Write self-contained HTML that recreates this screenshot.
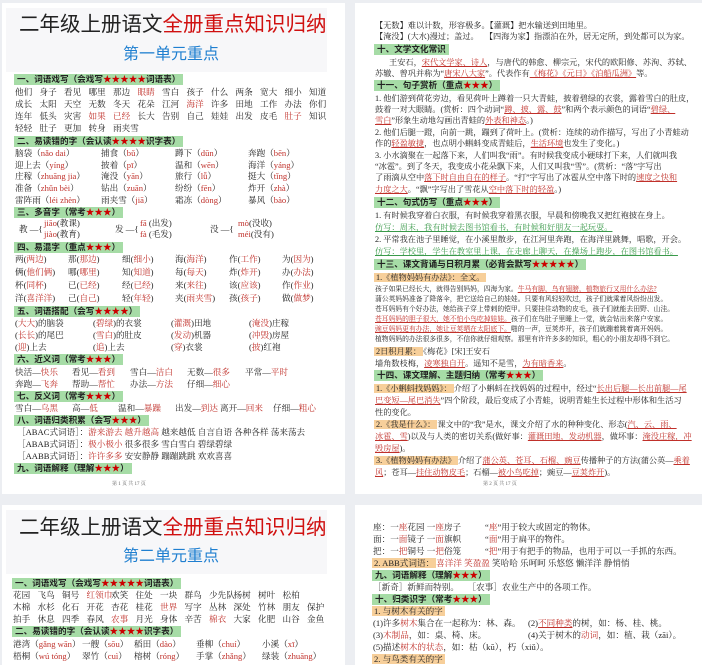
<!DOCTYPE html><html><head><meta charset="utf-8"><style>
*{margin:0;padding:0;box-sizing:border-box}
body{width:702px;height:662px;background:#eceef2;position:relative;overflow:hidden;font-family:"Liberation Serif","Noto Serif CJK SC",serif;font-size:8.6px;color:#222}
.p{position:absolute;background:#fff}
.l{position:absolute;white-space:nowrap;line-height:11px}
.h{position:absolute;background:#a6dca6;font-weight:bold;padding:0 3px;line-height:11px;white-space:nowrap;font-family:"Liberation Sans","Noto Sans CJK SC",sans-serif}
.o{background:#f7cf9a;padding:0 2px}
.r{color:#c0302a}
.u{color:#c0302a;text-decoration:underline}
.g{color:#3a9a4a;text-decoration:underline}
.s{color:#c00}
.t{position:absolute;font-family:"Liberation Sans","Noto Sans CJK SC",sans-serif;font-size:20.5px;white-space:nowrap;line-height:24px}
.st{position:absolute;font-family:"Liberation Sans","Noto Sans CJK SC",sans-serif;font-size:16px;color:#1f7fd0;white-space:nowrap;line-height:18px}
.f{position:absolute;font-size:5px;color:#666}
.w span{display:inline-block;width:24.5px}
.R .l{font-size:8.2px}
</style></head><body>
<div class="p" style="left:2px;top:3px;width:343px;height:491px"></div>
<div class="p" style="left:355px;top:3px;width:347px;height:491px"></div>
<div class="p" style="left:2px;top:505px;width:343px;height:160px"></div>
<div class="p" style="left:355px;top:505px;width:347px;height:160px"></div>
<div style="position:absolute;left:6px;top:8px;width:321px;height:64px;background:#f7f7f9"></div>
<div class="t" style="left:19px;top:13px">二年级上册语文<span style="color:#d01010">全册重点知识归纳</span></div>
<div class="st" style="left:123px;top:46px">第一单元重点</div>
<div class="h" style="left:14px;top:74px">一、词语戏写（会戏写<span class="s">★★★★★</span>词语表）</div>
<div class="l w" style="left:15px;top:87px"><span>他们</span><span>身子</span><span>看见</span><span>哪里</span><span>那边</span><span class="r">眼睛</span><span>雪白</span><span>孩子</span><span>什么</span><span>两条</span><span>宽大</span><span>细小</span><span>知道</span></div>
<div class="l w" style="left:15px;top:99px"><span>成长</span><span>太阳</span><span>天空</span><span>无数</span><span>冬天</span><span>花朵</span><span>江河</span><span class="r">海洋</span><span>许多</span><span>田地</span><span>工作</span><span>办法</span><span>你们</span></div>
<div class="l w" style="left:15px;top:111px"><span>连年</span><span>低头</span><span>灾害</span><span class="r">如果</span><span class="r">已经</span><span>长大</span><span>告别</span><span>自己</span><span>娃娃</span><span>出发</span><span>皮毛</span><span class="r">肚子</span><span>知识</span></div>
<div class="l w" style="left:15px;top:123px"><span>轻轻</span><span>肚子</span><span>更加</span><span>转身</span><span>雨夹雪</span></div>
<div class="h" style="left:14px;top:136px">二、易读错的字（会认读<span class="s">★★★★</span>识字表）</div>
<div class="l" style="left:15px;top:148px">脑袋（<span class="r">nǎo dai</span>）</div><div class="l" style="left:101px;top:148px">捕食（<span class="r">bǔ</span>）</div><div class="l" style="left:175px;top:148px">蹲下（<span class="r">dūn</span>）</div><div class="l" style="left:248px;top:148px">奔跑（<span class="r">bēn</span>）</div>
<div class="l" style="left:15px;top:160px">迎上去（<span class="r">yíng</span>）</div><div class="l" style="left:101px;top:160px">披着（<span class="r">pī</span>）</div><div class="l" style="left:175px;top:160px">温和（<span class="r">wēn</span>）</div><div class="l" style="left:248px;top:160px">海洋（<span class="r">yáng</span>）</div>
<div class="l" style="left:15px;top:171px">庄稼（<span class="r">zhuāng jia</span>）</div><div class="l" style="left:101px;top:171px">淹没（<span class="r">yān</span>）</div><div class="l" style="left:175px;top:171px">旅行（<span class="r">lǚ</span>）</div><div class="l" style="left:248px;top:171px">挺大（<span class="r">tǐng</span>）</div>
<div class="l" style="left:15px;top:183px">准备（<span class="r">zhǔn bèi</span>）</div><div class="l" style="left:101px;top:183px">钻出（<span class="r">zuān</span>）</div><div class="l" style="left:175px;top:183px">纷纷（<span class="r">fēn</span>）</div><div class="l" style="left:248px;top:183px">炸开（<span class="r">zhà</span>）</div>
<div class="l" style="left:15px;top:195px">雷阵雨（<span class="r">léi zhèn</span>）</div><div class="l" style="left:101px;top:195px">雨夹雪（<span class="r">jiā</span>）</div><div class="l" style="left:175px;top:195px">霜冻（<span class="r">dòng</span>）</div><div class="l" style="left:248px;top:195px">暴风（<span class="r">bào</span>）</div>
<div class="h" style="left:14px;top:207px">三、多音字（常考<span class="s">★★★</span>）</div>
<div class="l" style="left:19px;top:224px">教 —{</div><div class="l" style="left:44px;top:218px"><span class="r">jiāo</span>(教课)<br><span class="r">jiào</span>(教育)</div>
<div class="l" style="left:115px;top:224px">发 —{</div><div class="l" style="left:140px;top:218px"><span class="r">fā</span> (出发)<br><span class="r">fà</span> (毛发)</div>
<div class="l" style="left:210px;top:224px">没 —{</div><div class="l" style="left:238px;top:218px"><span class="r">mò</span>(没收)<br><span class="r">méi</span>(没有)</div>
<div class="h" style="left:14px;top:242px">四、易混字（重点<span class="s">★★★</span>）</div>
<div class="l" style="left:15px;top:254px">两(<span class="r">两边</span>)</div><div class="l" style="left:68px;top:254px">那(<span class="r">那边</span>)</div><div class="l" style="left:122px;top:254px">细(<span class="r">细小</span>)</div><div class="l" style="left:175px;top:254px">海(<span class="r">海洋</span>)</div><div class="l" style="left:229px;top:254px">作(<span class="r">工作</span>)</div><div class="l" style="left:282px;top:254px">为(<span class="r">因为</span>)</div>
<div class="l" style="left:15px;top:267px">俩(<span class="r">他们俩</span>)</div><div class="l" style="left:68px;top:267px">哪(<span class="r">哪里</span>)</div><div class="l" style="left:122px;top:267px">知(<span class="r">知道</span>)</div><div class="l" style="left:175px;top:267px">每(<span class="r">每天</span>)</div><div class="l" style="left:229px;top:267px">炸(<span class="r">炸开</span>)</div><div class="l" style="left:282px;top:267px">办(<span class="r">办法</span>)</div>
<div class="l" style="left:15px;top:280px">杯(<span class="r">同杯</span>)</div><div class="l" style="left:68px;top:280px">已(<span class="r">已经</span>)</div><div class="l" style="left:122px;top:280px">经(<span class="r">已经</span>)</div><div class="l" style="left:175px;top:280px">来(<span class="r">来往</span>)</div><div class="l" style="left:229px;top:280px">该(<span class="r">应该</span>)</div><div class="l" style="left:282px;top:280px">作(<span class="r">作业</span>)</div>
<div class="l" style="left:15px;top:293px">洋(<span class="r">喜洋洋</span>)</div><div class="l" style="left:68px;top:293px">己(<span class="r">自己</span>)</div><div class="l" style="left:122px;top:293px">轻(<span class="r">年轻</span>)</div><div class="l" style="left:175px;top:293px">夹(<span class="r">雨夹雪</span>)</div><div class="l" style="left:229px;top:293px">孩(<span class="r">孩子</span>)</div><div class="l" style="left:282px;top:293px">做(<span class="r">做梦</span>)</div>
<div class="h" style="left:14px;top:306px">五、词语搭配（会写<span class="s">★★★★</span>）</div>
<div class="l" style="left:15px;top:318px">(<span class="r">大大</span>)的脑袋</div><div class="l" style="left:93px;top:318px">(<span class="r">碧绿</span>)的衣裳</div><div class="l" style="left:171px;top:318px">(<span class="r">灌溉</span>)田地</div><div class="l" style="left:249px;top:318px">(<span class="r">淹没</span>)庄稼</div>
<div class="l" style="left:15px;top:330px">(<span class="r">长长</span>)的尾巴</div><div class="l" style="left:93px;top:330px">(<span class="r">雪白</span>)的肚皮</div><div class="l" style="left:171px;top:330px">(<span class="r">发动</span>)机器</div><div class="l" style="left:249px;top:330px">(<span class="r">冲毁</span>)房屋</div>
<div class="l" style="left:15px;top:342px">(<span class="r">迎</span>)上去</div><div class="l" style="left:93px;top:342px">(<span class="r">追</span>)上去</div><div class="l" style="left:171px;top:342px">(<span class="r">穿</span>)衣裳</div><div class="l" style="left:249px;top:342px">(<span class="r">披</span>)红袍</div>
<div class="h" style="left:14px;top:354px">六、近义词（常考<span class="s">★★★</span>）</div>
<div class="l" style="left:15px;top:367px">快活—<span class="r">快乐</span></div><div class="l" style="left:72px;top:367px">看见—<span class="r">看到</span></div><div class="l" style="left:130px;top:367px">雪白—<span class="r">洁白</span></div><div class="l" style="left:187px;top:367px">无数—<span class="r">很多</span></div><div class="l" style="left:245px;top:367px">平常—<span class="r">平时</span></div>
<div class="l" style="left:15px;top:379px">奔跑—<span class="r">飞奔</span></div><div class="l" style="left:72px;top:379px">帮助—<span class="r">帮忙</span></div><div class="l" style="left:130px;top:379px">办法—<span class="r">方法</span></div><div class="l" style="left:187px;top:379px">仔细—<span class="r">细心</span></div>
<div class="h" style="left:14px;top:391px">七、反义词（常考<span class="s">★★★</span>）</div>
<div class="l" style="left:15px;top:403px">雪白—<span class="r">乌黑</span></div><div class="l" style="left:72px;top:403px">高—<span class="r">低</span></div><div class="l" style="left:118px;top:403px">温和—<span class="r">暴躁</span></div><div class="l" style="left:175px;top:403px">出发—<span class="r">到达</span></div><div class="l" style="left:220px;top:403px">离开—<span class="r">回来</span></div><div class="l" style="left:273px;top:403px">仔细—<span class="r">粗心</span></div>
<div class="h" style="left:14px;top:415px">八、词语归类积累（会写<span class="s">★★★</span>）</div>
<div class="l" style="left:17px;top:427px">［ABAC式词语］：<span class="r">游来游去 越升越高</span> 越来越低 自言自语 各种各样 荡来荡去</div>
<div class="l" style="left:17px;top:439px">［ABAB式词语］：<span class="r">极小极小</span> 很多很多 雪白雪白 碧绿碧绿</div>
<div class="l" style="left:17px;top:451px">［AABB式词语］：<span class="r">许许多多</span> 安安静静 蹦蹦跳跳 欢欢喜喜</div>
<div class="h" style="left:14px;top:463px">九、词语解释（理解<span class="s">★★★</span>）</div>
<div class="f" style="left:112px;top:480px">第 1 页 共 17 页</div>

<div class="R">
<div class="l" style="left:375px;top:20px">【无数】难以计数，形容极多。【灌溉】把水输送到田地里。</div>
<div class="l" style="left:375px;top:31px">【淹没】(大水)漫过；盖过。　 【四海为家】指漂泊在外，居无定所，到处都可以为家。</div>
<div class="h" style="left:374px;top:44px">十、文学文化常识</div>
<div class="l" style="left:389px;top:57px">王安石，<span class="u">宋代文学家、诗人</span>，与唐代的韩愈、柳宗元，宋代的欧阳修、苏洵、苏轼、</div>
<div class="l" style="left:375px;top:68px">苏辙、曾巩并称为“<span class="u">唐宋八大家</span>”。代表作有<span class="u">《梅花》《元日》《泊船瓜洲》</span>等。</div>
<div class="h" style="left:374px;top:80px">十一、句子赏析（重点<span class="s">★★★</span>）</div>
<div class="l" style="left:375px;top:93px">1. 他们游到荷花旁边，看见荷叶上蹲着一只大青蛙，披着碧绿的衣裳，露着雪白的肚皮，</div>
<div class="l" style="left:375px;top:104px">鼓着一对大眼睛。(赏析：四个动词“<span class="u">蹲、披、露、鼓</span>”和两个表示颜色的词语“<span class="u">碧绿、</span></div>
<div class="l" style="left:375px;top:115px"><span class="u">雪白</span>”形象生动地勾画出青蛙的<span class="u">外表和神态</span>。)</div>
<div class="l" style="left:375px;top:127px">2. 他们后腿一蹬，向前一跳，蹦到了荷叶上。(赏析：连续的动作描写，写出了小青蛙动</div>
<div class="l" style="left:375px;top:138px">作的<span class="u">轻盈敏捷</span>，也点明小蝌蚪变成青蛙后，<span class="u">生活环境</span>也发生了变化。)</div>
<div class="l" style="left:375px;top:150px">3. 小水滴聚在一起落下来，人们叫我“雨”。有时候我变成小硬球打下来，人们就叫我</div>
<div class="l" style="left:375px;top:161px">“冰雹”。到了冬天，我变成小花朵飘下来，人们又叫我“雪”。(赏析：“落”字写出</div>
<div class="l" style="left:375px;top:172px">了雨滴从空中<span class="u">落下时自由自在的样子</span>。“打”字写出了冰雹从空中落下时的<span class="u">速度之快和</span></div>
<div class="l" style="left:375px;top:184px"><span class="u">力度之大</span>。“飘”字写出了雪花从<span class="u">空中落下时的轻盈</span>。)</div>
<div class="h" style="left:374px;top:197px">十二、句式仿写（重点<span class="s">★★★</span>）</div>
<div class="l" style="left:375px;top:210px">1. 有时候我穿着白衣服，有时候我穿着黑衣服，早晨和傍晚我又把红袍披在身上。</div>
<div class="l" style="left:375px;top:222px"><span class="g">仿写：周末，我有时候去图书馆看书，有时候和好朋友一起玩耍。</span></div>
<div class="l" style="left:375px;top:234px">2. 平常我在池子里睡觉，在小溪里散步，在江河里奔跑，在海洋里跳舞，唱歌，开会。</div>
<div class="l" style="left:375px;top:246px"><span class="g">仿写：学校里，学生在教室里上课，在走廊上聊天，在操场上跑步，在图书馆看书。</span></div>
<div class="h" style="left:374px;top:259px">十三、课文背诵与日积月累（必背会默写<span class="s">★★★★★</span>）</div>
<div class="l" style="left:374px;top:272px"><span class="o">1.《植物妈妈有办法》：全文。</span></div>
<div class="l" style="left:375px;top:284px;font-size:6.8px">孩子如果已经长大，就得告别妈妈，四海为家。<span class="u">牛马有脚，鸟有翅膀，植物旅行又用什么办法?</span></div>
<div class="l" style="left:375px;top:294px;font-size:6.8px">蒲公英妈妈准备了降落伞，把它送给自己的娃娃。只要有风轻轻吹过，孩子们就乘着风纷纷出发。</div>
<div class="l" style="left:375px;top:304px;font-size:6.8px">苍耳妈妈有个好办法，她给孩子穿上带刺的铠甲。只要挂住动物的皮毛，孩子们就能去田野、山洼。</div>
<div class="l" style="left:375px;top:314px;font-size:6.8px"><span class="u">苍耳妈妈的胆子很大，她不怕小鸟吃掉娃娃。</span>孩子们在鸟肚子里睡上一觉，就会钻出来落户安家。</div>
<div class="l" style="left:375px;top:324px;font-size:6.8px"><span class="u">豌豆妈妈更有办法，她让豆荚晒在太阳底下。</span>啪的一声，豆荚炸开，孩子们就蹦着跳着离开妈妈。</div>
<div class="l" style="left:375px;top:334px;font-size:6.8px">植物妈妈的办法很多很多，不信你就仔细观察。那里有许许多多的知识，粗心的小朋友却得不到它。</div>
<div class="l" style="left:374px;top:346px"><span class="o">2日积月累：</span>《梅花》[宋]王安石</div>
<div class="l" style="left:375px;top:358px">墙角数枝梅，<span class="u">凌寒独自开</span>。遥知不是雪，<span class="u">为有暗香来</span>。</div>
<div class="h" style="left:374px;top:370px">十四、课文理解、主题归纳（常考<span class="s">★★★</span>）</div>
<div class="l" style="left:374px;top:383px"><span class="o">1.《小蝌蚪找妈妈》：</span>介绍了小蝌蚪在找妈妈的过程中，经过“<span class="u">长出后腿—长出前腿—尾</span></div>
<div class="l" style="left:375px;top:395px"><span class="u">巴变短—尾巴消失</span>”四个阶段，最后变成了小青蛙，说明青蛙生长过程中形体和生活习</div>
<div class="l" style="left:375px;top:407px">性的变化。</div>
<div class="l" style="left:374px;top:419px"><span class="o">2.《我是什么》：</span>课文中的“我”是水，课文介绍了水的种种变化、形态(<span class="u">汽、云、雨、</span></div>
<div class="l" style="left:375px;top:431px"><span class="u">冰雹、雪</span>)以及与人类的密切关系(做好事：<span class="u">灌溉田地，发动机器</span>，做坏事：<span class="u">淹没庄稼，冲</span></div>
<div class="l" style="left:375px;top:443px"><span class="u">毁房屋</span>)。</div>
<div class="l" style="left:374px;top:455px"><span class="o">3.《植物妈妈有办法》</span>介绍了<span class="u">蒲公英、苍耳、石榴、豌豆</span>传播种子的方法(蒲公英—<span class="u">乘着</span></div>
<div class="l" style="left:375px;top:467px"><span class="u">风</span>；苍耳—<span class="u">挂住动物皮毛</span>；石榴—<span class="u">被小鸟吃掉</span>；豌豆—<span class="u">豆荚炸开</span>)。</div>
</div>
<div class="f" style="left:483px;top:480px">第 2 页 共 17 页</div>

<div style="position:absolute;left:6px;top:510px;width:321px;height:64px;background:#f7f7f9"></div>
<div class="t" style="left:19px;top:516px">二年级上册语文<span style="color:#d01010">全册重点知识归纳</span></div>
<div class="st" style="left:123px;top:548px">第二单元重点</div>
<div class="h" style="left:12px;top:578px">一、词语戏写（会戏写<span class="s">★★★★★</span>词语表）</div>
<div class="l w" style="left:13px;top:590px"><span>花园</span><span>飞鸟</span><span>铜号</span><span class="r">红领巾</span><span>欢笑</span><span>住处</span><span>一块</span><span>群鸟</span><span>少先队</span><span>杨树</span><span>树叶</span><span>松柏</span></div>
<div class="l w" style="left:13px;top:602px"><span>木棉</span><span>水杉</span><span>化石</span><span>开花</span><span>杏花</span><span>桂花</span><span class="r">世界</span><span>写字</span><span>丛林</span><span>深处</span><span>竹林</span><span>朋友</span><span>保护</span></div>
<div class="l w" style="left:13px;top:614px"><span>拍手</span><span>休息</span><span>四季</span><span>春风</span><span class="r">农事</span><span>月光</span><span>身体</span><span>辛苦</span><span class="r">棉衣</span><span>大家</span><span>化肥</span><span>山谷</span><span>金鱼</span></div>
<div class="h" style="left:12px;top:626px">二、易读错的字（会认读<span class="s">★★★★</span>识字表）</div>
<div class="l" style="left:13px;top:639px">港湾（<span class="r">gǎng wān</span>）</div><div class="l" style="left:82px;top:639px">一艘（<span class="r">sōu</span>）</div><div class="l" style="left:134px;top:639px">稻田（<span class="r">dào</span>）</div><div class="l" style="left:196px;top:639px">垂柳（<span class="r">chuí</span>）</div><div class="l" style="left:262px;top:639px">小溪（<span class="r">xī</span>）</div>
<div class="l" style="left:13px;top:651px">梧桐（<span class="r">wú tóng</span>）</div><div class="l" style="left:82px;top:651px">翠竹（<span class="r">cuì</span>）</div><div class="l" style="left:134px;top:651px">榕树（<span class="r">róng</span>）</div><div class="l" style="left:196px;top:651px">手掌（<span class="r">zhǎng</span>）</div><div class="l" style="left:262px;top:651px">绿装（<span class="r">zhuāng</span>）</div>

<div class="l" style="left:373px;top:522px">座：一<span class="r">座</span>花园 一<span class="r">座</span>房子</div><div class="l" style="left:485px;top:522px">“<span class="r">座</span>”用于较大或固定的物体。</div>
<div class="l" style="left:373px;top:534px">面：一<span class="r">面</span>镜子 一<span class="r">面</span>旗帜</div><div class="l" style="left:485px;top:534px">“<span class="r">面</span>”用于扁平的物件。</div>
<div class="l" style="left:373px;top:546px">把：一<span class="r">把</span>铜号 一<span class="r">把</span>俗笼</div><div class="l" style="left:485px;top:546px">“<span class="r">把</span>”用于有把手的物品，也用于可以一手抓的东西。</div>
<div class="l" style="left:372px;top:558px"><span class="o">2. ABB式词语：</span><span class="r">喜洋洋 笑盈盈</span> 笑哈哈 乐呵呵 乐悠悠 懒洋洋 静悄悄</div>
<div class="h" style="left:372px;top:570px">九、词语解释（理解<span class="s">★★★</span>）</div>
<div class="l" style="left:373px;top:582px">［新奇］新鲜而特别。　　［农事］农业生产中的各项工作。</div>
<div class="h" style="left:372px;top:594px">十、归类识字（常考<span class="s">★★★</span>）</div>
<div class="l" style="left:372px;top:606px"><span class="o">1. 与树木有关的字</span></div>
<div class="l" style="left:373px;top:618px">(1)许多<span class="r">树木</span>集合在一起称为：林、森。</div><div class="l" style="left:528px;top:618px">(2)<span class="u">不同种类</span>的树，如：杨、桂、桃。</div>
<div class="l" style="left:373px;top:630px">(3)<span class="r">木制品</span>，如：桌、椅、床。</div><div class="l" style="left:528px;top:630px">(4)关于树木的<span class="r">动词</span>，如：植、栽（zāi）。</div>
<div class="l" style="left:373px;top:642px">(5)描述<span class="r">树木的状态</span>，如：枯（kū），朽（xiǔ）。</div>
<div class="l" style="left:372px;top:654px"><span class="o">2. 与鸟类有关的字</span></div>
</body></html>
